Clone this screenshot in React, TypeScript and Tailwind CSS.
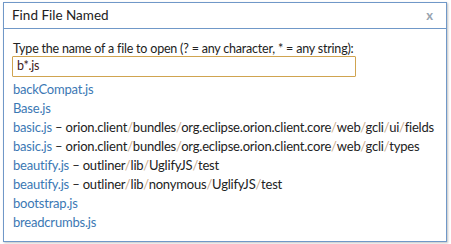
import React from "react";

const Slash = () => <span className="text-[#c9a98a]">/</span>;

function Path({ parts }: { parts: string[] }) {
  return (
    <span className="text-[#222]">
      {parts.map((p, i) => (
        <React.Fragment key={i}>
          {i > 0 && <Slash />}
          {p}
        </React.Fragment>
      ))}
    </span>
  );
}

const rows: { name: string; path?: string[] }[] = [
  { name: "backCompat.js" },
  { name: "Base.js" },
  { name: "basic.js", path: ["orion.client", "bundles", "org.eclipse.orion.client.core", "web", "gcli", "ui", "fields"] },
  { name: "basic.js", path: ["orion.client", "bundles", "org.eclipse.orion.client.core", "web", "gcli", "types"] },
  { name: "beautify.js", path: ["outliner", "lib", "UglifyJS", "test"] },
  { name: "beautify.js", path: ["outliner", "lib", "nonymous", "UglifyJS", "test"] },
  { name: "bootstrap.js" },
  { name: "breadcrumbs.js" },
];

export default function App() {
  return (
    <div className="w-[451px] h-[244px] bg-white pl-[3px] pt-[2px]" style={{ fontFamily: 'Lato, sans-serif' }}>
      <div className="w-[444px] h-[240px] border border-[#7098c8] bg-white shadow-[1px_1px_2px_rgba(0,0,0,0.25)] flex flex-col">
        <div className="h-[26px] border-b border-[#7098c8] flex items-center justify-between pl-[8px] pr-[13px]">
          <span className="text-[13.5px] text-[#222] leading-none">Find File Named</span>
          <span className="text-[13px] font-bold text-[#99a4b0] leading-none">x</span>
        </div>
        <div className="pl-[9px] pt-[12px] flex flex-col text-[12.5px] tracking-[-0.2px]">
          <div className="text-[#222] leading-[16px]">Type the name of a file to open (? = any character, * = any string):</div>
          <div className="w-[344px] h-[21px] border border-[#d0a450] rounded-[1px] flex items-center pl-[4px] text-[#402020] mt-[-1px] -ml-[1px]">b*.js</div>
          <div className="flex flex-col mt-[3px] text-[13px]">
            {rows.map((r, i) => (
              <div key={i} className="h-[19px] leading-[19px] whitespace-nowrap">
                <span className="text-[#3b78b4]">{r.name}</span>
                {r.path && (
                  <>
                    <span className="text-[#222]"> – </span>
                    <Path parts={r.path} />
                  </>
                )}
              </div>
            ))}
          </div>
        </div>
      </div>
    </div>
  );
}
